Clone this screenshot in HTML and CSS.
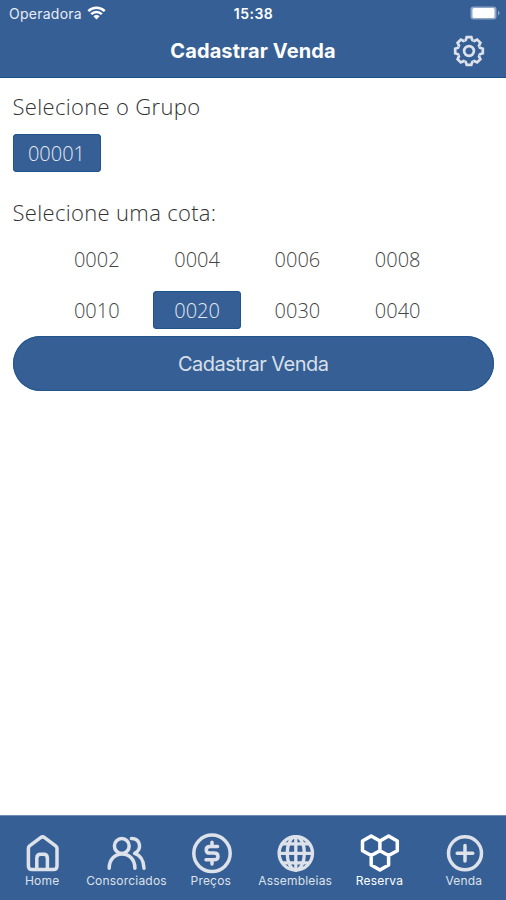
FILE: index.html
```html
<!DOCTYPE html>
<html lang="pt-BR">
  <head>
    <meta charset="utf-8" />
    <title>Cadastrar Venda</title>
    <link rel="stylesheet" href="styles.css">
  </head>

  <body>
    <div class="app">
      <header class="header">
        <div class="status">
          <div class="carrier">
            <span>Operadora</span>
            <svg class="wifi" viewBox="0 0 20 15">
              <path d="M1.2 5.4a12.6 12.6 0 0 1 17.6 0M4.3 8.7a8.1 8.1 0 0 1 11.4 0" />
              <path class="solid" d="M10 14.4l-3.3-3.3a4.7 4.7 0 0 1 6.6 0z" />
            </svg>
          </div>
          <span class="time">15:38</span>
          <svg class="battery" viewBox="0 0 30 14">
            <rect class="case" x="0.5" y="0.5" width="26" height="13" rx="3" />
            <rect class="level" x="2.5" y="2" width="22" height="10" rx="1.5" />
            <path class="tip" d="M28 4.5c2 .8 2 4.2 0 5z" />
          </svg>
        </div>
        <div class="titlebar">
          <h1>Cadastrar Venda</h1>
          <svg class="gear" viewBox="-17 -17 34 34">
            <defs>
              <path id="tooth" d="M-4.3 -10.5L-3.3 -10.9L-2.3 -13.8H2.3L3.3 -10.9L4.3 -10.5" />
            </defs>
            <use href="#tooth" />
            <use href="#tooth" transform="rotate(45)" />
            <use href="#tooth" transform="rotate(90)" />
            <use href="#tooth" transform="rotate(135)" />
            <use href="#tooth" transform="rotate(180)" />
            <use href="#tooth" transform="rotate(225)" />
            <use href="#tooth" transform="rotate(270)" />
            <use href="#tooth" transform="rotate(315)" />
            <circle r="4.9" />
          </svg>
        </div>
      </header>

      <main class="content">
        <h2 class="grupo-label">Selecione o Grupo</h2>
        <button class="chip active">00001</button>

        <h2 class="cota-label">Selecione uma cota:</h2>
        <div class="cotas">
          <button class="chip">0002</button>
          <button class="chip">0004</button>
          <button class="chip">0006</button>
          <button class="chip">0008</button>
          <button class="chip">0010</button>
          <button class="chip active">0020</button>
          <button class="chip">0030</button>
          <button class="chip">0040</button>
        </div>

        <button class="submit">Cadastrar Venda</button>
      </main>

      <nav class="tabs">
        <a class="tab">
          <svg viewBox="0 0 40 40">
            <path d="M6.4 15.2Q6.4 13.8 7.6 12.8L18.6 4.6Q20.6 3.2 22.6 4.6L33.6 12.8Q35 13.8 35 15.2V33Q35 36.6 31.4 36.6H10Q6.4 36.6 6.4 33Z" />
            <path d="M14.8 36V25.5Q14.8 21.3 18.6 21.3H21.8Q25.4 21.3 25.4 25.5V36" />
          </svg>
          <span>Home</span>
        </a>
        <a class="tab">
          <svg viewBox="0 0 40 40">
            <circle cx="15.8" cy="13" r="7.4" />
            <path d="M3.2 35.2C3.2 16.2 28.9 16.2 28.9 35.2" />
            <path d="M25.4 5.5C35.2 5.8 36 17 28.6 20.4C34.5 22.3 37.7 28 38 35.2" />
          </svg>
          <span>Consorciados</span>
        </a>
        <a class="tab">
          <svg viewBox="0 0 40 40">
            <circle cx="21" cy="20.3" r="18.2" />
            <path d="M26.6 13.6H19Q15.2 13.6 15.2 16.9Q15.2 20.1 19 20.1H23Q27 20.1 27 23.4Q27 26.7 23 26.7H15M21 9.2V13.6M21 26.7V31" />
          </svg>
          <span>Preços</span>
        </a>
        <a class="tab">
          <svg class="globe" viewBox="0 0 40 40">
            <circle cx="20.8" cy="20.3" r="16.7" />
            <ellipse cx="20.8" cy="20.3" rx="8.6" ry="16.7" />
            <path d="M20.8 4V37M4.5 20.3H37M7.5 10.8H34M7.5 29.8H34" />
          </svg>
          <span>Assembleias</span>
        </a>
        <a class="tab selected">
          <svg viewBox="0 0 40 40">
            <path d="M12.2 3L20.9 7.9V17.7L12.2 22.6L3.5 17.7V7.9ZM29.6 3L38.3 7.9V17.7L29.6 22.6L20.9 17.7V7.9ZM20.9 17.7L29.6 22.6V32L20.9 37L12.2 32V22.6Z" />
          </svg>
          <span>Reserva</span>
        </a>
        <a class="tab">
          <svg viewBox="0 0 40 40">
            <circle cx="21" cy="20.3" r="16.5" />
            <path d="M21 12.5V28.1M13.2 20.3H28.8" />
          </svg>
          <span>Venda</span>
        </a>
      </nav>
    </div>
  </body>
</html>
```

FILE: styles.css
```css
* {
  box-sizing: border-box;
  margin: 0;
  padding: 0;
}
body {
  background: #fff;
  font-family: Inter, "Liberation Sans", sans-serif;
}
svg {
  display: block;
  overflow: visible;
  fill: none;
  stroke: currentColor;
}
button {
  border: 0;
  background: none;
}
.app {
  display: flex;
  flex-direction: column;
  height: 100vh;
}

/* header */
.header {
  height: 78px;
  background: #365f95;
  border-bottom: 1px solid #17528a;
  color: #fff;
}
.status {
  display: grid;
  grid-template-columns: 1fr auto 1fr;
  align-items: center;
  height: 26px;
  padding: 0 6px 0 9px;
  font-size: 14px;
}
.carrier {
  display: flex;
  align-items: center;
  gap: 5px;
  color: #e8edf5;
  letter-spacing: 0.25px;
}
.wifi {
  width: 19px;
  height: 14px;
  color: #fff;
  stroke-width: 2.7;
}
.wifi .solid {
  fill: currentColor;
  stroke: none;
}
.time {
  margin-right: 2px;
  font-weight: 600;
  letter-spacing: 0.5px;
}
.battery {
  justify-self: end;
  width: 30px;
  height: 14px;
  stroke: none;
}
.battery .case,
.battery .tip {
  fill: #8fa6c6;
}
.battery .level {
  fill: #fff;
}
.titlebar {
  display: grid;
  grid-template-columns: 1fr auto 1fr;
  align-items: center;
  height: 50px;
  padding: 0 20px;
}
.titlebar h1 {
  grid-column: 2;
  font-size: 20px;
  font-weight: 700;
  letter-spacing: 0.1px;
}
.gear {
  justify-self: end;
  width: 34px;
  height: 34px;
  color: #dde2ea;
  stroke-width: 2.7;
}

/* content */
.content {
  flex: 1;
  padding: 13px 12px 0 12.5px;
}
.content h2 {
  color: #333;
  font: 300 22px/30px "Open Sans", sans-serif;
  letter-spacing: 0.33px;
}
.chip {
  display: block;
  width: 88px;
  height: 38px;
  border-radius: 4px;
  color: #444;
  font: 300 20px/39px "Open Sans", sans-serif;
  text-align: center;
}
.chip.active {
  background: #365f95;
  box-shadow: inset 0 0 0 1px #20558c;
  color: #e4e8ef;
}
.grupo-label {
  margin-bottom: 13px;
}
.cota-label {
  margin: 25px 0 13px;
}
.cotas {
  display: grid;
  grid-template-columns: repeat(4, 88px);
  justify-content: center;
  gap: 13px 12.3px;
  margin-right: 12px;
}
.submit {
  display: block;
  width: 100%;
  height: 55px;
  margin-top: 7px;
  border-radius: 28px;
  background: #365f95;
  box-shadow: inset 0 0 0 1px #20558c;
  color: #d9e0ea;
  font: 400 20px Inter, sans-serif;
  letter-spacing: -0.5px;
}

/* tab bar */
.tabs {
  display: grid;
  grid-template-columns: repeat(6, 1fr);
  height: 85px;
  padding-top: 17px;
  border-top: 1px solid #6f8db3;
  background: #365f95;
}
.tab {
  display: flex;
  flex-direction: column;
  align-items: center;
  color: #dde1e9;
  font-size: 12px;
}
.tab svg {
  width: 40px;
  height: 40px;
  stroke-width: 3.5;
  stroke-linecap: round;
  stroke-linejoin: round;
}
.tab svg.globe {
  stroke-width: 3.3;
}
.tab span {
  line-height: 16px;
  letter-spacing: 0.2px;
}
.tab.selected {
  color: #fff;
}
```
